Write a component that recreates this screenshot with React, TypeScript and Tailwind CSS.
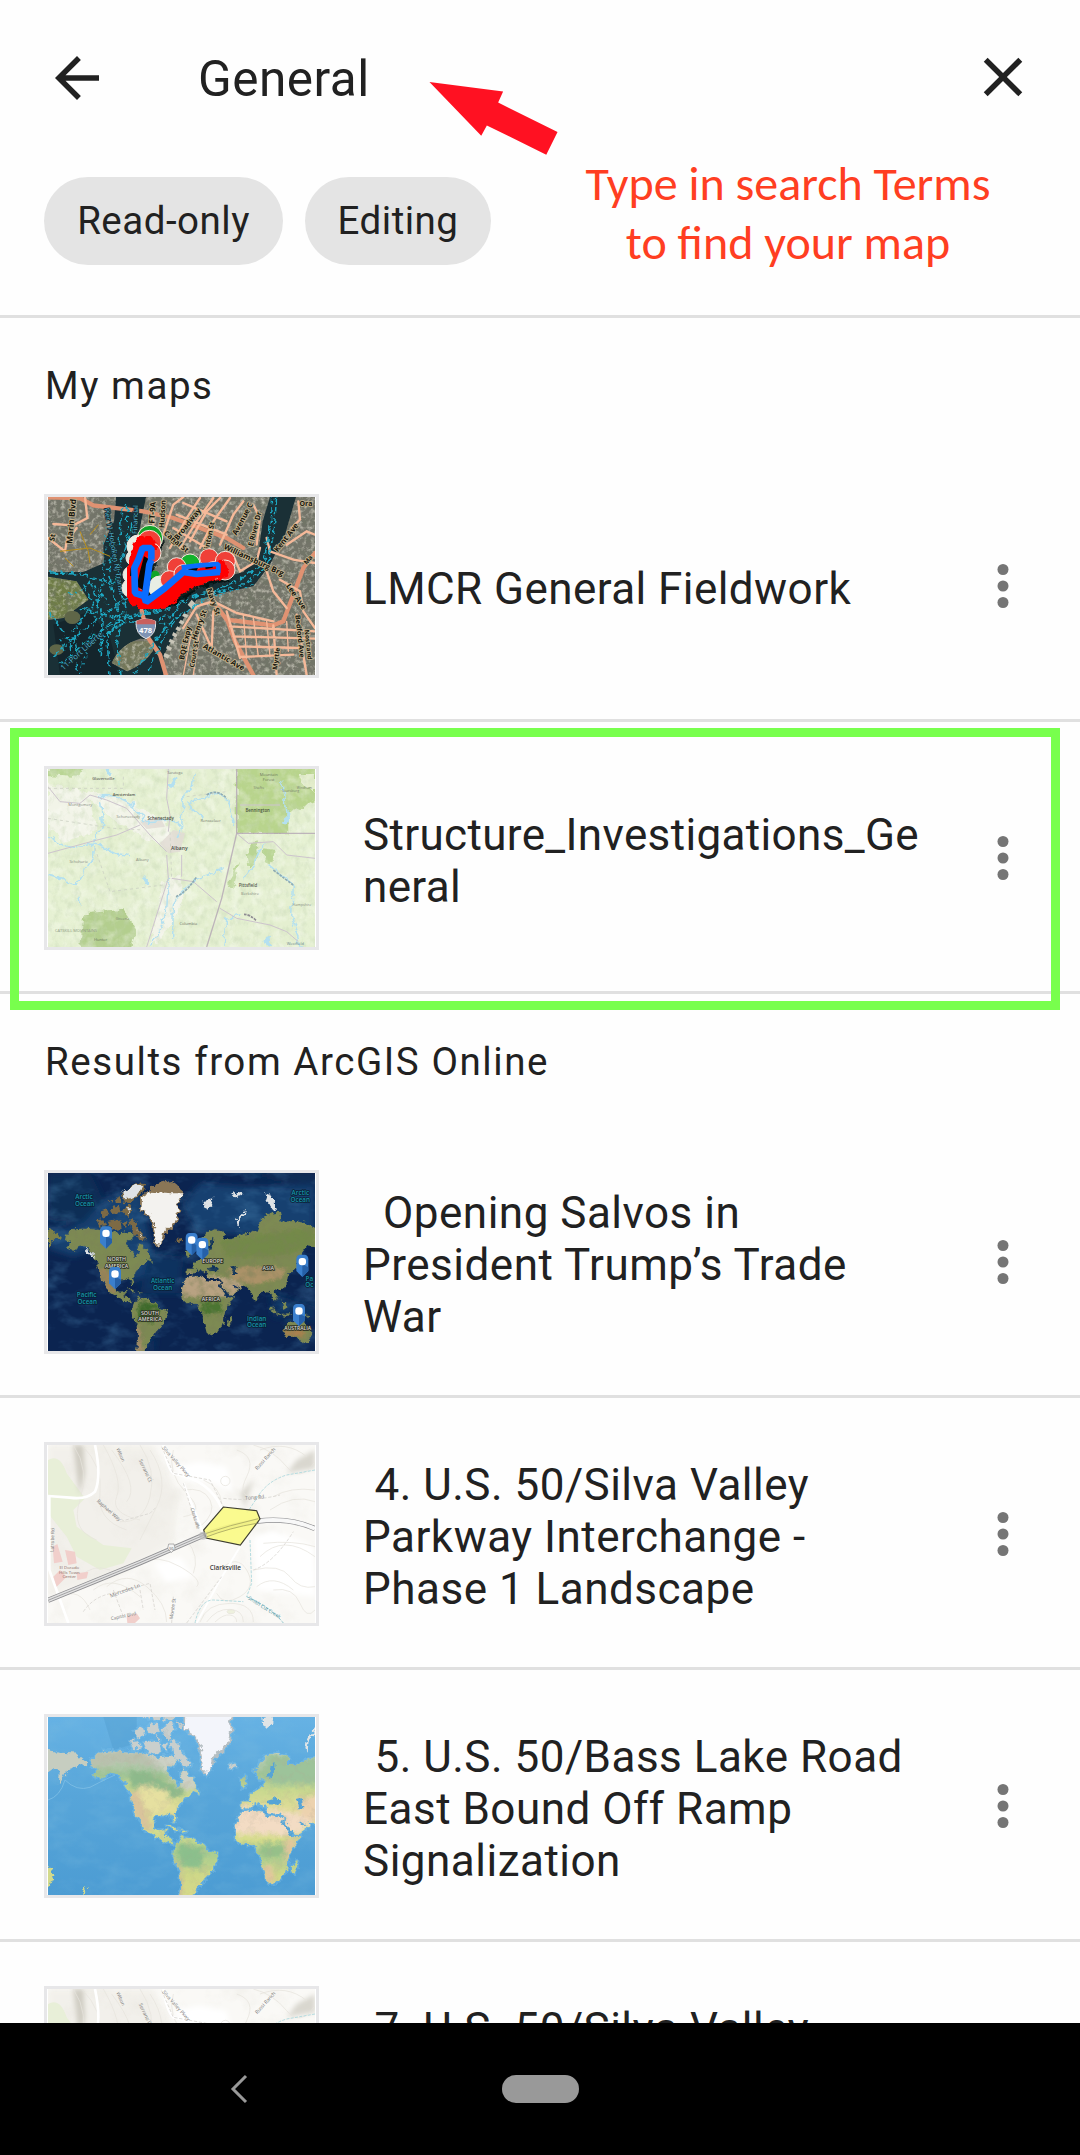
import React from "react";

/* ---------- shared map helpers ---------- */

type LabelProps = {
  x: number;
  y: number;
  t: string;
  s?: number;
  r?: number;
  c?: string;
  halo?: string;
  w?: number;
};

function Label({ x, y, t, s = 14, r = 0, c = "#333", halo, w = 400 }: LabelProps) {
  return (
    <text
      x={x}
      y={y}
      fontSize={s}
      fontWeight={w}
      fill={c}
      stroke={halo}
      strokeWidth={halo ? 5 : 0}
      paintOrder="stroke"
      strokeLinejoin="round"
      textAnchor="middle"
      dominantBaseline="central"
      transform={`rotate(${r} ${x} ${y})`}
      fontFamily="'Open Sans', sans-serif"
    >
      {t}
    </text>
  );
}

function Noise({ id, freq, matrix }: { id: string; freq: string; matrix: string }) {
  return (
    <filter id={id} x="0" y="0" width="100%" height="100%">
      <feTurbulence type="fractalNoise" baseFrequency={freq} numOctaves={4} seed={7} />
      <feColorMatrix type="matrix" values={matrix} />
    </filter>
  );
}

function MapSvg({ top, children }: { top: number; children: React.ReactNode }) {
  return (
    <svg viewBox={`24 ${top} 801 534`} className="block h-full w-full" preserveAspectRatio="none">
      {children}
    </svg>
  );
}

/* ---------- harbour satellite map ---------- */

function HarborMap() {
  return (
    <MapSvg top={37}>
      <defs>
        <Noise id="hb-n" freq="0.04" matrix="0 0 0 0 0.16  0 0 0 0 0.18  0 0 0 0 0.13  2.2 0 0 0 -0.92" />
        <Noise id="hb-l" freq="0.08" matrix="0 0 0 0 0.76  0 0 0 0 0.74  0 0 0 0 0.64  0 2.4 0 0 -1.1" />
        <filter id="hb-r" x="-5%" y="-5%" width="110%" height="110%">
          <feTurbulence type="fractalNoise" baseFrequency="0.06" numOctaves={2} seed={3} />
          <feDisplacementMap in="SourceGraphic" scale={22} xChannelSelector="R" yChannelSelector="G" />
        </filter>
        <clipPath id="hb-c">
          <path d="M24 37H228L222 110 190 180 192 235 130 262H24ZM24 276 110 290 145 345 70 400 24 405ZM318 37H690L668 110 655 205 610 262 520 285 400 350 310 345 270 250 300 130ZM768 37H825V571H370L372 510 432 400 470 345 560 322 640 305 690 240 735 150ZM215 535Q240 480 300 462 345 460 338 500 310 540 262 560Z" />
        </clipPath>
      </defs>
      <rect x="24" y="37" width="801" height="534" fill="#1a3036" />
      <path d="M40 420 150 380 210 460 240 571H60Z" fill="#14252c" />
      <g clipPath="url(#hb-c)">
        <rect x="24" y="37" width="801" height="534" fill="#74756a" />
        <path d="M24 276 110 290 150 345 70 400 24 405Z" fill="#6f7d46" />
        <path d="M215 571 220 470H345V571Z" fill="#75785a" />
        <rect x="24" y="37" width="801" height="534" filter="url(#hb-n)" opacity=".8" />
        <rect x="24" y="37" width="801" height="534" filter="url(#hb-l)" opacity=".65" />
      </g>
      <g fill="none" stroke="#5f6648" strokeWidth="20">
        <ellipse cx="97" cy="398" rx="14" ry="10" />
        <ellipse cx="50" cy="495" rx="12" ry="6" />
      </g>
      <g fill="#c9c6b8">
        <path d="M455 345 470 360 455 372 443 360ZM432 385 446 392 440 400 426 394ZM422 405 434 412 428 420 416 414ZM412 425 424 432 418 440 406 434ZM400 442 413 450 407 459 396 452ZM390 462 405 470 400 478 386 471ZM382 482 396 490 391 498 378 491ZM374 505 390 512 384 522 370 515Z" />
      </g>
      <g fill="none" stroke="#f6b999" strokeLinecap="round">
        <path strokeWidth="13" stroke="#e09272" d="M24 38 120 40 160 62 310 80 400 100 560 160 610 190M305 378 325 460 360 510 378 571M520 350 560 405 700 422 730 410 760 330 790 250 825 205M560 400 585 470 640 571" />
        <path
          strokeWidth="7"
          d="M135 37 142 100 100 122 40 118M24 160 75 200 80 170 110 130M340 120V60M370 150 400 60 430 37M390 190 440 100 480 40M420 190 470 110 520 40M450 170 500 80 540 40M480 190 520 110 570 40M400 130 500 190M410 90 560 150M430 55 560 110M540 180 580 90 610 50M570 190 600 260 650 230 660 190M640 60 660 100 650 180M775 50 780 105 755 130M680 160 690 200 760 225 825 235M680 260 700 320 740 370M720 285 780 320 790 380 825 430M740 180 800 140 825 150M430 430 470 365 520 350 590 385M470 390 510 480M520 380 515 490M560 380 600 520M590 385 700 410M570 425 825 440M580 455 825 462M590 485 780 490M600 517 760 510M700 422 710 571M770 390 800 571"
        />
        <path strokeWidth="4" d="M455 440 430 571M480 430 460 571M610 390 620 520M640 400 655 515M680 410 690 515M740 410 745 500" />
      </g>
      <g fill="none" stroke="#b98f1c" strokeWidth="3">
        <path d="M60 200 150 190 210 215M120 140 145 200 150 235M75 220 100 245M150 150 175 120" />
      </g>
      <g fill="none" stroke="#1fa9c4" strokeWidth="4.5" strokeDasharray="22 8" filter="url(#hb-r)">
        <path d="M245 70 240 160 205 250 220 330 240 400 200 460 210 571M262 60V170L230 280 260 380 230 470 240 571M285 90 265 180M30 265 120 268 180 285 240 300M24 380 90 470 110 560M130 300 160 360 100 440 110 500M40 515 150 420 260 340M60 540 180 440 250 380M150 290 190 400 180 520M695 37 690 130 670 240 600 285 520 320 420 345 400 400 360 450 280 571M710 37 702 140 680 250 610 300 520 325 410 400 380 440 320 571M250 395 330 380 440 350M200 430 260 400 400 370M120 370 250 410 380 420M150 480 240 420" />
        <path strokeDasharray="9 7" strokeWidth="3.5" d="M200 90 190 280 160 420 120 571M270 300 230 250 205 170M90 330 160 300 220 380M75 500 60 460 120 450M640 300 500 340M290 420 400 390 430 350" />
      </g>
      <Label x={92} y={110} t="Marin Blvd" s={25} r={-85} c="#16160f" w={700} halo="#c6b48e" />
      <Label x={36} y={158} t="St" s={22} r={-80} c="#16160f" w={700} halo="#c6b48e" />
      <Label x={223} y={200} t="Pier 11-Hoboken NJ Transit" s={21} r={80} c="#54b9d3" halo="#14262c" />
      <Label x={124} y={498} t="11-Port Liberte" s={23} r={-42} c="#54b9d3" halo="#14262c" />
      <Label x={285} y={118} t="NJ Financial" s={21} r={-88} c="#54b9d3" halo="#14262c" />
      <Label x={335} y={84} t="FT-9A" s={24} r={-87} c="#16160f" w={700} halo="#c6b48e" />
      <Label x={366} y={88} t="Hudson" s={22} r={-87} c="#16160f" w={700} halo="#c6b48e" />
      <Label x={436} y={125} t="E Broadway" s={23} r={-52} c="#16160f" w={700} halo="#c6b48e" />
      <Label x={410} y={170} t="Canal St" s={22} r={40} c="#16160f" w={700} halo="#c6b48e" />
      <Label x={506} y={162} t="Clinton St" s={21} r={-78} c="#16160f" w={700} halo="#c6b48e" />
      <Label x={607} y={102} t="Avenue C" s={23} r={-62} c="#16160f" w={700} halo="#c6b48e" />
      <Label x={643} y={132} t="E River Dr" s={22} r={-76} c="#16160f" w={700} halo="#c6b48e" />
      <Label x={642} y={225} t="Williamsburg Brg" s={23} r={25} c="#16160f" w={700} halo="#c6b48e" />
      <Label x={738} y={158} t="Kent Ave" s={23} r={-52} c="#16160f" w={700} halo="#c6b48e" />
      <Label x={770} y={335} t="Lee Ave" s={23} r={55} c="#16160f" w={700} halo="#c6b48e" />
      <Label x={798} y={56} t="Ora" s={21} c="#16160f" w={700} halo="#c6b48e" />
      <Label x={804} y={225} t="Ma" s={19} r={-50} c="#16160f" w={700} halo="#c6b48e" />
      <Label x={780} y={455} t="Bedford Ave" s={21} r={84} c="#16160f" w={700} halo="#c6b48e" />
      <Label x={806} y={480} t="Nostrand" s={19} r={84} c="#16160f" w={700} halo="#c6b48e" />
      <Label x={552} y={516} t="Atlantic Ave" s={23} r={30} c="#16160f" w={700} halo="#c6b48e" />
      <Label x={476} y={420} t="Henry St" s={22} r={-70} c="#16160f" w={700} halo="#c6b48e" />
      <Label x={434} y={475} t="BQE Expy" s={22} r={-78} c="#16160f" w={700} halo="#c6b48e" />
      <Label x={462} y={508} t="Court St" s={20} r={-80} c="#16160f" w={700} halo="#c6b48e" />
      <Label x={522} y={350} t="Navy St" s={22} r={70} c="#16160f" w={700} halo="#c6b48e" />
      <Label x={708} y={522} t="Myrtle" s={20} r={-82} c="#16160f" w={700} halo="#c6b48e" />
      {/* survey tracks */}
      <g filter="url(#hb-r)">
        <path d="M325 165 298 240 292 310 325 350 400 310 450 268 555 243" fill="none" stroke="#071012" strokeWidth="76" strokeLinejoin="round" strokeLinecap="round" transform="translate(8 6)" opacity=".85" />
      </g>
      <g fill="#f04038" stroke="#f5e9df" strokeWidth="3">
        <circle cx="330" cy="160" r="38" fill="#12a428" />
        <circle cx="295" cy="185" r="34" fill="#e8eee4" />
        <circle cx="280" cy="220" r="22" fill="#dfe9df" />
        <circle cx="275" cy="270" r="26" fill="#e8eee4" />
        <circle cx="275" cy="310" r="29" fill="#e8eee4" />
        <circle cx="345" cy="272" r="14" fill="#12a428" stroke="none" />
        <circle cx="328" cy="172" r="35" />
        <circle cx="332" cy="205" r="31" />
        <circle cx="360" cy="308" r="34" fill="#e8eee4" />
        <circle cx="450" cy="238" r="30" fill="#13b32c" />
        <circle cx="410" cy="247" r="28" />
        <circle cx="388" cy="285" r="27" />
        <circle cx="430" cy="268" r="28" />
        <circle cx="507" cy="220" r="28" />
        <circle cx="490" cy="270" r="24" fill="#13b32c" />
        <circle cx="465" cy="266" r="27" />
        <circle cx="520" cy="258" r="27" />
        <circle cx="556" cy="230" r="30" />
        <circle cx="555" cy="256" r="30" />
      </g>
      <path filter="url(#hb-r)" fill="none" stroke="#ff0000" strokeWidth="50" strokeLinejoin="bevel" d="M340 165 302 185 294 240 276 275 282 330 320 362 372 344 435 292 500 268 560 250" />
      <path fill="#060606" d="M312 215 330 225 318 270 330 300 312 318 290 305 300 260ZM272 250 284 240 280 270 270 275ZM445 252 475 247 470 258 447 262ZM495 242 520 240 518 249 497 253Z" />
      <g fill="none" stroke="#0a6dff" strokeLinejoin="bevel">
        <path strokeWidth="20" d="M334 225V190H308L295 225 283 250 285 325 315 335 328 240 334 225M308 320 318 352 375 310 430 262 470 268 540 262" />
        <path strokeWidth="14" d="M425 248 480 242 535 238V265" />
      </g>
      {/* interstate shield */}
      <path d="M288 410Q318 396 347 410 350 450 318 462 286 450 288 410Z" fill="#7f93b4" stroke="#e6e6e6" strokeWidth="3" />
      <path d="M290 408Q318 396 346 408V419H290Z" fill="#c9605d" />
      <Label x={317} y={437} t="478" s={23} c="#fff" w={700} />
    </MapSvg>
  );
}

/* ---------- topographic map of the Albany area ---------- */

function TopoMap() {
  return (
    <MapSvg top={42}>
      <defs>
        <Noise id="tp-g" freq="0.009" matrix="0 0 0 0 0.80  0 0 0 0 0.89  0 0 0 0 0.66  2.6 0 0 0 -0.9" />
        <Noise id="tp-w" freq="0.03" matrix="0 0 0 0 1  0 0 0 0 1  0 0 0 0 0.97  0 2.2 0 0 -0.95" />
        <Noise id="tp-d" freq="0.05 0.035" matrix="0 0 0 0 0.55  0 0 0 0 0.66  0 0 0 0 0.45  0 0 1.4 0 -0.64" />
        <filter id="tp-r" x="-10%" y="-10%" width="120%" height="120%">
          <feTurbulence type="fractalNoise" baseFrequency="0.04" numOctaves={3} seed={5} />
          <feDisplacementMap in="SourceGraphic" scale={26} xChannelSelector="R" yChannelSelector="G" />
          <feGaussianBlur stdDeviation="2" />
        </filter>
      </defs>
      <rect x="24" y="42" width="801" height="534" fill="#e4efd0" />
      <rect x="24" y="42" width="801" height="534" filter="url(#tp-g)" opacity=".8" />
      <g filter="url(#tp-r)">
        <path d="M24 90 150 110 170 230 70 260 24 220ZM130 110 250 130 380 200 420 290 330 260 200 180ZM370 380 420 360 430 440 360 560 330 576Z" fill="#f5f4ec" opacity=".85" />
        <path d="M590 30H840V130L745 175V235L590 233Z" fill="#b8d48c" />
        <path d="M130 475 250 465 290 520 270 590H120Z" fill="#b3ce8e" />
        <path d="M24 30H160L100 65 24 60ZM620 300 650 255 655 310 625 340ZM670 280 705 285 695 330 675 320ZM560 390 600 320 580 400Z" fill="#b9d594" />
        <path d="M775 60H825V110L790 90Z" fill="#e3edcb" />
      </g>
      <rect x="24" y="42" width="801" height="534" filter="url(#tp-w)" opacity=".4" />
      <rect x="24" y="42" width="801" height="534" filter="url(#tp-d)" opacity=".75" />
      <g fill="#e2dcd5" opacity=".85">
        <path d="M300 200 360 185 375 215 320 222ZM360 265 400 225 435 235 420 290 385 295Z" />
      </g>
      <g fill="none" stroke="#b4e0f0" strokeWidth="4.5" strokeLinecap="round" filter="url(#tp-r)">
        <path d="M175 125Q230 110 290 160L315 200 395 195 425 215M182 140 188 215 160 262 158 310 110 385 24 360M24 245 90 280 170 265 240 300 270 305M465 55 460 90 430 130 425 215 415 250M445 148 490 190M445 148 540 110 565 150 580 205M385 365 380 470 335 576M398 550 400 450 425 410 470 370 550 345M668 262 640 330 610 370M690 330 760 390 755 480 780 571M725 80 740 190M117 430 120 450M555 576 560 490 600 480" />
        <path d="M393 95 406 70M735 205 745 175M312 370 322 385M203 45 212 50M683 552 688 565" strokeWidth="12" />
      </g>
      <g fill="none" stroke="#cdc4cd" strokeWidth="3">
        <path d="M24 95 60 140 120 145 150 120 200 135 260 160 330 240 380 290M24 295 160 258 230 240 300 210M385 42 380 130 390 180 385 230M395 370 460 380 530 440M425 300 425 365M380 300 385 370 350 480 320 576M590 235 625 265 700 260 740 300 825 310M540 460 590 490 690 510 740 530 775 560M600 150 720 150" />
        <path strokeDasharray="9 9" strokeWidth="2.5" stroke="#cdd1c4" d="M24 100H250V60M24 190 220 220 310 225M165 280 210 410 370 390M390 230 395 370M440 125 560 110" />
      </g>
      <g fill="none" stroke="#b3a5b4" strokeWidth="4">
        <path d="M590 42V235H825M590 235 545 430 500 576" opacity=".8" />
      </g>
      <g stroke="#8fabb3" fill="none" strokeWidth="5" strokeDasharray="8 3">
        <path d="M500 120Q530 100 560 130M408 425Q440 412 470 365M700 345Q740 375 762 392" />
        <path d="M612 478Q630 478 650 498" stroke="#8e8b92" />
      </g>
      <Label x={190} y={71} t="Gloversville" s={12} c="#65695f" w={600} />
      <Label x={252} y={119} t="Amsterdam" s={12} c="#55594f" w={600} />
      <Label x={121} y={149} t="Montgomery" s={12} c="#858a7d" />
      <Label x={265} y={185} t="Schenectady" s={12} c="#858a7d" />
      <Label x={362} y={190} t="Schenectady" s={13} c="#474b43" w={600} />
      <Label x={512} y={195} t="Rensselaer" s={12} c="#72766b" />
      <Label x={418} y={278} t="Albany" s={15} c="#474b43" w={600} />
      <Label x={307} y={313} t="Albany" s={12} c="#858a7d" />
      <Label x={116} y={320} t="Schoharie" s={12} c="#858a7d" />
      <Label x={405} y={53} t="Saratoga" s={11} c="#777" />
      <Label x={686} y={58} t="Mountain" s={12} c="#6a775a" />
      <Label x={686} y={72} t="Forest" s={12} c="#6a775a" />
      <Label x={653} y={166} t="Bennington" s={13} c="#475039" w={600} />
      <Label x={752} y={105} t="Searsburg" s={11} c="#7c8570" />
      <Label x={656} y={97} t="Shafts" s={11} c="#7c8570" />
      <Label x={793} y={98} t="Windham" s={10} c="#7c8570" />
      <Label x={624} y={390} t="Pittsfield" s={13} c="#55594f" w={600} />
      <Label x={630} y={414} t="Berkshire" s={12} c="#858a7d" />
      <Label x={786} y={447} t="Hampshire" s={11} c="#858a7d" />
      <Label x={445} y={505} t="Columbia" s={12} c="#72766b" />
      <Label x={108} y={525} t="CATSKILL MOUNTAINS" s={12} c="#8f9a83" />
      <Label x={248} y={491} t="Greene" s={12} c="#7c8570" />
      <Label x={182} y={552} t="Hunter" s={12} c="#6c775e" />
      <Label x={766} y={564} t="Westfield" s={12} c="#6d8a8f" />
    </MapSvg>
  );
}

/* ---------- world outlines shared by both world maps ---------- */

const AMERICAS =
  "M78 225 75 240 95 250 80 265 100 272 125 258 150 270 168 300 178 330 180 355 195 375 205 395 215 402 228 410 250 420 265 428 276 430 270 418 258 412 256 396 240 398 228 392 225 375 232 362 255 360 268 355 276 372 281 372 276 352 290 335 300 320 315 312 320 300 336 306 332 292 325 275 310 260 300 244 290 255 296 280 285 292 278 275 262 262 258 250 275 235 285 225 270 215 240 220 200 210 160 205 130 203 100 205ZM285 420 300 413 325 418 345 430 360 447 380 457 378 475 365 500 350 515 340 530 325 550 315 571 300 600H285L290 560 292 520 290 495 275 465 276 445ZM258 385 280 388 288 395 270 392ZM292 396 306 398 300 402Z";
const ARCTIC =
  "M170 180 190 178 198 195 178 200ZM205 185 240 178 245 205 215 208ZM180 155 200 148 205 165 188 170ZM210 145 235 140 240 160 215 162ZM245 150 270 135 280 150 262 168ZM248 190 262 185 258 205ZM268 180 285 185 300 215 318 235 310 245 290 232 275 210ZM245 100 285 70 318 72 312 95 280 115 275 130 255 128ZM225 118 240 112 244 130 228 132ZM205 120 215 116 218 128ZM408 237 425 234 430 243 412 247Z";
const GREENLAND =
  "M300 110 330 88 350 70 390 60 415 80 433 95 416 130 418 160 410 190 393 205 375 222 366 240 358 265 345 250 340 225 338 195 325 165 300 150Z";
const AFRICA =
  "M440 352 482 348 492 360 540 366 555 400 562 413 582 412 570 430 555 455 552 480 545 500 530 520 510 527 500 518 490 480 485 455 470 432 440 430 424 415 424 390ZM562 478 575 468 577 485 568 502 562 497Z";
const EURASIA =
  "M440 345V326H460L462 312 472 302 492 290 496 275 478 268 470 250 500 215 525 205 555 220 548 236 575 235 620 222 640 212 650 215 664 180 690 158 720 155 725 185 760 183 800 190 830 205V262L800 258 785 280 775 305 772 325 745 340 740 370 735 385 710 390 705 400 715 420 703 425 690 400 672 390 645 425 632 395 620 380 600 374 602 386 575 408 560 400 545 370 540 358 505 352 500 338 490 340 480 325 470 330 455 345ZM440 295 452 284 448 262 438 272ZM775 345 790 335 800 310 794 308 786 330ZM695 435 715 455 708 460ZM725 420 745 440 730 450ZM690 440 720 462 750 460 745 468 700 462Z";
const AUSTRALIA = "M728 515 745 492 768 482 790 475 800 495 817 520 806 548 788 552 770 530 738 530ZM760 452 800 460 810 470 785 468Z";
const SEAS = "M500 322 515 318 540 324 530 334 505 333ZM575 320 586 318 590 345 580 345ZM540 368 566 408 560 410 536 374ZM580 372 600 384 588 386ZM505 262 512 240 520 228 518 262 505 275Z";

function Pin({ x, y }: { x: number; y: number }) {
  return (
    <g transform={`translate(${x} ${y})`}>
      <path d="M-18-20Q-18-32-8-34H8Q18-32 18-20V15L0 33-18 15Z" fill="#3a7fcd" />
      <path d="M0-6 18 4V15L0 33Z" fill="#2560a8" />
      <rect x="-11" y="-24" width="22" height="22" rx="9" fill="#fff" />
    </g>
  );
}

function SatelliteWorldMap() {
  const sea = "#1592a6";
  return (
    <MapSvg top={39}>
      <defs>
        <Noise id="sw-o" freq="0.012 0.02" matrix="0 0 0 0 0.08  0 0 0 0 0.26  0 0 0 0 0.48  2.4 0 0 0 -1.15" />
        <Noise id="sw-l" freq="0.04" matrix="0 0 0 0 0.2  0 0 0 0 0.22  0 0 0 0 0.1  2.4 0 0 0 -1" />
        <filter id="sw-r" x="-5%" y="-5%" width="110%" height="110%">
          <feTurbulence type="fractalNoise" baseFrequency="0.07" numOctaves={3} seed={2} />
          <feDisplacementMap in="SourceGraphic" scale={20} xChannelSelector="R" yChannelSelector="G" />
        </filter>
        <filter id="sw-b">
          <feGaussianBlur stdDeviation="9" />
        </filter>
        <filter id="sw-s">
          <feGaussianBlur stdDeviation="4" />
        </filter>
        <clipPath id="sw-c">
          <path d={AMERICAS + AFRICA + EURASIA + AUSTRALIA} />
        </clipPath>
      </defs>
      <rect x="24" y="39" width="801" height="534" fill="#0b2450" />
      <g filter="url(#sw-b)">
        <path d="M480 70 620 80 825 75V230L620 225 470 215 430 130ZM24 210 100 200 160 130 300 80 330 240 350 320 280 370 240 240 100 290 24 265Z" fill="#133f70" />
        <path d="M24 39H150L190 120 130 190 24 180ZM600 39H825V70L700 60Z" fill="#0b2d57" />
        <path d="M330 280 430 290 420 400 300 400ZM690 400 825 440V480L700 470ZM300 573 350 530 340 573Z" fill="#10325f" />
      </g>
      <rect x="24" y="39" width="801" height="534" filter="url(#sw-o)" opacity=".4" />
      <g filter="url(#sw-r)">
        <path d={AMERICAS + AFRICA + EURASIA + AUSTRALIA} fill="#7d8a52" />
        <g clipPath="url(#sw-c)">
          <g filter="url(#sw-s)">
            <path d="M150 320 210 330 230 400 180 390Z" fill="#9a8458" />
            <path d="M280 500 300 500 310 573 285 573Z" fill="#a38a67" />
            <path d="M300 420 360 440 340 490 290 480Z" fill="#3e6a2b" />
            <path d="M415 340 560 350 610 375 570 412 415 410Z" fill="#b8a282" />
            <path d="M480 425 540 425 545 460 490 465Z" fill="#4b7431" />
            <path d="M560 325 690 318 745 330 720 355 640 375 580 360Z" fill="#ab9268" />
            <path d="M540 240 820 200 825 265 700 290 560 290Z" fill="#73894a" />
            <path d="M728 515 780 500 800 530 740 530Z" fill="#a9804f" />
          </g>
        </g>
        <path d="M24 210 50 215 60 235 40 240 30 265 24 255Z" fill="#7b8148" />
        <path d={ARCTIC} fill="#7d6a45" />
        <path d="M250 95 285 75 310 78 290 105 270 115 255 118ZM290 210 305 225 312 238ZM262 145 276 145 265 160ZM215 150 230 148ZM488 120 520 115 515 135 500 148 490 140ZM570 103 605 95 610 108 585 112ZM675 100 690 105 700 125 708 150 695 148 682 122ZM588 195Q592 165 618 152L612 165 598 180 596 205ZM130 262 150 275 170 295 150 285Z" fill="#dfe3e6" />
        <path d={GREENLAND} fill="#8a7657" />
        <path d="M306 112 332 95 395 100 430 100 413 130 413 160 403 188 386 203 369 220 358 260 347 247 344 217 341 190 327 163 305 148Z" fill="#f3f2ef" />
        <path d={SEAS} fill="#10305c" />
      </g>
      <g clipPath="url(#sw-c)">
        <rect x="24" y="39" width="801" height="534" filter="url(#sw-l)" opacity=".5" />
      </g>
      <Label x={132} y={110} t="Arctic" s={19} c={sea} halo="#0a2036" w={600} />
      <Label x={134} y={131} t="Ocean" s={19} c={sea} halo="#0a2036" w={600} />
      <Label x={781} y={97} t="Arctic" s={19} c={sea} halo="#0a2036" w={600} />
      <Label x={781} y={118} t="Ocean" s={19} c={sea} halo="#0a2036" w={600} />
      <Label x={368} y={362} t="Atlantic" s={19} c={sea} halo="#0a2036" w={600} />
      <Label x={368} y={382} t="Ocean" s={19} c={sea} halo="#0a2036" w={600} />
      <Label x={140} y={404} t="Pacific" s={19} c={sea} halo="#0a2036" w={600} />
      <Label x={142} y={423} t="Ocean" s={19} c={sea} halo="#0a2036" w={600} />
      <Label x={650} y={475} t="Indian" s={19} c={sea} halo="#0a2036" w={600} />
      <Label x={650} y={494} t="Ocean" s={19} c={sea} halo="#0a2036" w={600} />
      <Label x={808} y={355} t="Pa" s={19} c={sea} halo="#0a2036" w={600} />
      <Label x={808} y={374} t="Oc" s={19} c={sea} halo="#0a2036" w={600} />
      <Label x={230} y={298} t="NORTH" s={16} c="#d9d9d2" halo="#2c3022" w={600} />
      <Label x={230} y={317} t="AMERICA" s={16} c="#d9d9d2" halo="#2c3022" w={600} />
      <Label x={330} y={458} t="SOUTH" s={16} c="#d9d9d2" halo="#2c3022" w={600} />
      <Label x={330} y={478} t="AMERICA" s={16} c="#d9d9d2" halo="#2c3022" w={600} />
      <Label x={518} y={303} t="EUROPE" s={16} c="#d9d9d2" halo="#2c3022" w={600} />
      <Label x={513} y={416} t="AFRICA" s={16} c="#d9d9d2" halo="#2c3022" w={600} />
      <Label x={685} y={325} t="ASIA" s={16} c="#d9d9d2" halo="#2c3022" w={600} />
      <Label x={773} y={504} t="AUSTRALIA" s={15} c="#d9d9d2" halo="#2c3022" w={600} />
      <Pin x={198} y={233} />
      <Pin x={225} y={355} />
      <Pin x={455} y={253} />
      <Pin x={487} y={267} />
      <Pin x={787} y={318} />
      <Pin x={777} y={466} />
    </MapSvg>
  );
}

function PhysicalWorldMap() {
  return (
    <MapSvg top={51}>
      <defs>
        <linearGradient id="pw-s" x1="0" y1="0" x2="0" y2="1">
          <stop offset="0" stopColor="#66b2e4" />
          <stop offset=".45" stopColor="#57a5d9" />
          <stop offset="1" stopColor="#4c9cd3" />
        </linearGradient>
        <linearGradient id="pw-l" gradientUnits="userSpaceOnUse" x1="0" y1="200" x2="0" y2="560">
          <stop offset="0" stopColor="#cfd3cb" />
          <stop offset=".09" stopColor="#b4cbae" />
          <stop offset=".17" stopColor="#9fc396" />
          <stop offset=".27" stopColor="#c7d88f" />
          <stop offset=".4" stopColor="#dfdc97" />
          <stop offset=".56" stopColor="#d3dc8f" />
          <stop offset=".7" stopColor="#a9cd90" />
          <stop offset=".85" stopColor="#cfd888" />
          <stop offset="1" stopColor="#d6d98a" />
        </linearGradient>
        <Noise id="pw-n" freq="0.012 0.02" matrix="0 0 0 0 0.22  0 0 0 0 0.52  0 0 0 0 0.74  2.6 0 0 0 -1.1" />
        <Noise id="pw-t" freq="0.05" matrix="0 0 0 0 0.45  0 0 0 0 0.4  0 0 0 0 0.3  2.4 0 0 0 -1.15" />
        <filter id="pw-r" x="-5%" y="-5%" width="110%" height="110%">
          <feTurbulence type="fractalNoise" baseFrequency="0.07" numOctaves={3} seed={2} />
          <feDisplacementMap in="SourceGraphic" scale={18} xChannelSelector="R" yChannelSelector="G" />
        </filter>
        <filter id="pw-b">
          <feGaussianBlur stdDeviation="6" />
        </filter>
        <clipPath id="pw-c">
          <path d={AMERICAS + AFRICA + EURASIA} />
        </clipPath>
      </defs>
      <rect x="24" y="51" width="801" height="534" fill="url(#pw-s)" />
      <rect x="24" y="51" width="801" height="534" filter="url(#pw-n)" opacity=".22" />
      <path d="M24 300Q60 290 75 240 110 275 150 262 190 240 225 225" fill="none" stroke="#79bbe4" strokeWidth="3" />
      <path d="M190 51H290V130L220 150Z" fill="#4f9bce" opacity=".4" />
      <g transform="translate(59 -100) scale(1.24)">
        <path d={AMERICAS + AFRICA + EURASIA + GREENLAND + ARCTIC} fill="none" stroke="#7cc0ea" strokeWidth="8" strokeLinejoin="round" opacity=".45" filter="url(#pw-r)" />
        <g filter="url(#pw-r)">
          <path d={AMERICAS + AFRICA + EURASIA} fill="url(#pw-l)" />
          <g clipPath="url(#pw-c)">
            <g filter="url(#pw-b)">
              <path d="M70 200 250 205 240 250 190 235 120 235 70 250Z" fill="#b9c1ae" />
              <path d="M200 205 330 210 330 300 290 290 250 245Z" fill="#cdd1c6" />
              <path d="M165 255 200 250 290 290 310 305 270 320 230 290 180 300Z" fill="#8db98b" />
              <path d="M185 300 200 285 260 300 270 340 230 360 205 340Z" fill="#e6e0a0" />
              <path d="M165 310 190 300 225 390 205 395 180 360Z" fill="#d9c39b" />
              <path d="M415 335 560 350 620 370 570 408 415 404Z" fill="#f3dcc4" />
              <path d="M424 408H560V425H430Z" fill="#d8de8a" />
              <path d="M485 428 540 428 545 460 490 465Z" fill="#95c089" />
              <path d="M545 420 580 415 560 460 545 480ZM490 480 515 480 520 527H495Z" fill="#e2c79d" />
              <path d="M575 320 640 310V375L585 365Z" fill="#ecd2ae" />
              <path d="M500 210 640 220V280L520 285 495 270Z" fill="#9dc39a" />
              <path d="M285 425 350 440 345 485 290 480Z" fill="#8bbf8c" />
              <path d="M272 455 292 490 295 600H280L285 500Z" fill="#c9b39b" />
            </g>
            <rect x="-30" y="100" width="700" height="480" filter="url(#pw-t)" opacity=".3" />
          </g>
          <path d={ARCTIC} fill="#c9cfcd" />
          <path d="M250 150 262 160 270 175 260 178ZM285 130 300 140 290 150ZM230 165 240 170 235 175ZM265 80 295 100 280 125 262 120Z" fill="#c3cac9" />
          <path d={GREENLAND} fill="#b6bfc3" />
          <path d="M304 108 335 88 350 74 390 66 425 98 410 130 412 160 403 188 386 203 369 220 358 260 347 247 344 217 341 190 327 163 303 148Z" fill="#f3f5fb" />
          <path d={SEAS} fill="#57a4d6" />
          <path d="M488 120 520 115 515 135 500 148 490 140ZM592 200Q592 170 628 145L618 160 602 182 600 205Z" fill="#dfe4e6" />
          <path d="M-34 200 0 208 40 210 68 235 50 240 30 245 15 255 5 275-2 285 0 255-10 245-34 262Z" fill="#c6cdc0" />
          <path d="M-34 480-20 490-14 510-22 530-34 540ZM62 530 66 540 58 552 46 556 56 545Z" fill="#d3da8c" />
        </g>
      </g>
    </MapSvg>
  );
}

/* ---------- Clarksville street map ---------- */

function StreetMap({ id }: { id: string }) {
  const contours = [
    "M100 45Q150 120 120 210T170 330",
    "M125 45Q190 110 180 190T260 300",
    "M190 45Q250 150 230 200T300 270",
    "M215 60Q300 170 260 215",
    "M300 45Q350 120 330 200T240 275",
    "M330 60Q390 150 350 230T300 330",
    "M400 60Q380 130 440 190T430 260",
    "M430 180Q490 170 510 210T480 290",
    "M490 150Q540 170 545 220",
    "M590 60Q650 80 620 140T640 200",
    "M640 45Q700 60 740 110T825 95",
    "M660 60Q740 30 800 80",
    "M700 200Q750 170 825 180",
    "M690 240Q760 190 825 215",
    "M670 340Q760 330 825 350",
    "M660 380Q730 310 825 380",
    "M640 420Q720 400 750 440T825 470",
    "M700 480Q760 470 780 520T825 540",
    "M650 470Q700 430 760 480",
    "M480 576Q500 520 570 520T640 576",
    "M500 576Q530 535 570 538T610 576",
    "M525 576Q550 552 570 555T590 576",
    "M200 470Q260 420 320 470T380 576",
    "M160 480Q220 430 300 500",
    "M300 400Q350 370 420 410T470 470",
    "M440 330Q480 380 460 430",
    "M120 440Q160 400 210 420",
    "M60 500Q120 470 150 540",
    "M540 420Q590 370 620 420T600 500 530 490",
  ];
  return (
    <MapSvg top={45}>
      <defs>
        <Noise id={`st-n${id}`} freq="0.012" matrix="0 0 0 0 0.78  0 0 0 0 0.76  0 0 0 0 0.7  2.4 0 0 0 -1.15" />
        <filter id={`st-b${id}`}>
          <feGaussianBlur stdDeviation="8" />
        </filter>
      </defs>
      <rect x="24" y="45" width="801" height="534" fill="#faf9f6" />
      <path d="M24 45H340L420 200 400 340 250 430 24 500Z" fill="#f1efe9" opacity=".8" filter={`url(#st-b${id})`} />
      <rect x="24" y="45" width="801" height="534" filter={`url(#st-n${id})`} opacity=".35" />
      <path d="M24 90Q60 70 80 130L135 205 100 240 110 290 190 345 275 355 250 400 180 420 110 380 80 320 24 250Z" fill="#e8efd8" />
      <g filter={`url(#st-b${id})`}>
        <path d="M100 45H130L135 130 118 195Z" fill="#cfccc2" />
        <path d="M770 90 825 60V115L740 130ZM600 190 640 150 615 230Z" fill="#d9d7cf" />
        <path d="M400 110 480 95 560 110 580 190 520 160 430 150ZM340 400 420 380 460 440 380 460ZM640 320 700 300 825 350V500L650 480Z" fill="#fff" />
      </g>
      <g fill="none" stroke="#e6e3dd" strokeWidth="2.2">
        {contours.map((d) => (
          <path key={d} d={d} />
        ))}
        <circle cx="556" cy="153" r="14" />
        <ellipse cx="573" cy="545" rx="12" ry="6" fill="#eef1de" />
      </g>
      <g fill="none" stroke="#fff" strokeWidth="8">
        <path d="M165 45Q185 140 165 185 140 210 90 203L24 198M28 200V420L85 579M370 45Q380 110 400 130 510 150 545 235M430 160 470 260 490 310" />
        <path d="M470 579 540 450 600 350" strokeWidth="6" />
      </g>
      <g fill="none" stroke="#d8d6d1" strokeWidth="2.5" strokeDasharray="10 5">
        <path d="M170 215 250 272 330 250 350 230M365 50 400 130 510 150 550 230M430 160 470 290M300 100 340 150M550 205Q640 215 720 195M640 420Q700 400 760 305M130 545Q160 500 215 490L330 460 345 540M220 480 250 560M300 480 310 540M395 579 400 500M440 579 545 440" />
      </g>
      <g fill="none" stroke="#b5dce0" strokeWidth="3" strokeDasharray="9 4">
        <path d="M825 120 740 135Q690 150 660 190L620 250M630 330 635 460 620 500M465 579Q480 510 520 510L610 515" />
        <path d="M620 500Q690 530 730 579" stroke="#8cc3cc" strokeWidth="3" />
      </g>
      <g fill="#f1cfcb">
        <path d="M75 360 105 365 110 400 85 405ZM38 350 52 342 68 395 42 400ZM40 440 60 420 80 440 50 470ZM110 430 145 425 140 445 112 450ZM260 560 290 550 300 565 285 579H262Z" />
      </g>
      {/* highway */}
      <g fill="none">
        <path d="M24 511 300 398 490 316Q570 285 655 273 750 262 825 296" stroke="#8f8f92" strokeWidth="16" />
        <path d="M24 511 300 398 490 316" stroke="#e2e2e2" strokeWidth="11" />
        <path d="M24 511 300 398 490 316" stroke="#a2a2a4" strokeWidth="3" />
        <path d="M655 273Q750 262 825 296" stroke="#f8f8f8" strokeWidth="12" />
      </g>
      <path d="M386 342H402L405 355 394 368 383 355Z" fill="#f4f4f4" stroke="#909090" strokeWidth="2" />
      <Label x={394} y={354} t="50" s={11} c="#555" />
      <path d="M550 231 650 242 660 267 601 345 498 324 491 300Z" fill="#fafa86" fillOpacity=".92" stroke="#3d3d30" strokeWidth="3.5" />
      <path d="M493 312Q570 285 655 266M496 322Q570 293 650 280" fill="none" stroke="#a8a763" strokeWidth="2.5" />
      <circle cx="489" cy="317" r="12" fill="#bcbcbc" opacity=".7" />
      <Label x={556} y={411} t="Clarksville" s={19} c="#3a3a3a" w={600} />
      <Label x={409} y={94} t="Silva Valley Pkwy" s={15} r={48} c="#7b7b7b" />
      <Label x={243} y={74} t="Wilson" s={14} r={65} c="#7b7b7b" />
      <Label x={317} y={122} t="Serrano Ct" s={15} r={65} c="#7b7b7b" />
      <Label x={207} y={240} t="Raphael Way" s={15} r={42} c="#7b7b7b" />
      <Label x={467} y={265} t="Clarksville" s={14} r={72} c="#7b7b7b" />
      <Label x={644} y={201} t="Tong Rd" s={15} r={-5} c="#7b7b7b" />
      <Label x={675} y={86} t="Russi Ranch" s={15} r={-48} c="#7b7b7b" />
      <Label x={255} y={481} t="Mercedes Ln" s={16} r={-20} c="#7b7b7b" />
      <Label x={250} y={557} t="Capitol Blvd" s={14} r={-12} c="#7b7b7b" />
      <Label x={397} y={536} t="Monte St" s={15} r={-82} c="#7b7b7b" />
      <Label x={36} y={330} t="Latrobe Rd" s={14} r={-88} c="#7b7b7b" />
      <Label x={88} y={410} t="El Dorado" s={13} c="#8b6a66" />
      <Label x={88} y={425} t="Hills Town" s={13} c="#8b6a66" />
      <Label x={88} y={439} t="Center" s={13} c="#8b6a66" />
      <Label x={674} y={532} t="Smith Cut Creek" s={15} r={32} c="#4a93a2" />
    </MapSvg>
  );
}

/* ---------- app chrome ---------- */

function Chip({ width, children }: { width: string; children: React.ReactNode }) {
  return (
    <button
      className={`flex h-[88px] items-center justify-center rounded-full bg-[#e4e4e4] text-[38.5px] leading-none tracking-[0.5px] ${width}`}
    >
      {children}
    </button>
  );
}

function SectionTitle({ children }: { children: React.ReactNode }) {
  return (
    <h2 className="flex h-[132px] shrink-0 items-center px-[45px] pt-1 text-[38.5px] leading-[46px] tracking-[1.57px]">
      {children}
    </h2>
  );
}

type MapRowProps = { title: React.ReactNode; tracking?: string; children: React.ReactNode };

function MapRow({ title, tracking = "tracking-[0.5px]", children }: MapRowProps) {
  return (
    <div className="flex h-[272px] shrink-0 items-center border-b-3 border-[#e0e0e0] pt-[3px] pr-[44px] pl-[44px]">
      <div className="h-[184px] w-[275px] shrink-0 border-3 border-[#e7e7e9] bg-white px-px">{children}</div>
      <p className={`ml-[44px] flex-1 pt-[5px] text-[44px] leading-[52px] whitespace-pre ${tracking}`}>{title}</p>
      <svg viewBox="0 0 24 24" className="h-[66px] w-[66px] shrink-0 fill-[#757575]">
        <circle cx="12" cy="6" r="2" />
        <circle cx="12" cy="12" r="2" />
        <circle cx="12" cy="18" r="2" />
      </svg>
    </div>
  );
}

export default function App() {
  return (
    <div className="relative flex h-[2155px] w-[1080px] flex-col overflow-hidden bg-[#fefefe] font-[Roboto,sans-serif] text-[#212121]">
      <header className="h-[318px] shrink-0 border-b-3 border-[#e0e0e0]">
        <div className="flex h-[177px] items-start px-[44px] pt-[45px]">
          <svg viewBox="0 0 24 24" className="h-[66px] w-[66px] fill-[#212121]">
            <path d="M20 11H7.83l5.59-5.59L12 4l-8 8 8 8 1.41-1.41L7.83 13H20v-2z" />
          </svg>
          <h1 className="ml-[88px] flex-1 pt-[4px] text-[49.5px] leading-[60px] tracking-[0.5px]">General</h1>
          <svg viewBox="0 0 24 24" className="-mt-[1.5px] h-[66px] w-[66px] fill-[#212121]">
            <path d="M19 6.41L17.59 5 12 10.59 6.41 5 5 6.41 10.59 12 5 17.59 6.41 19 12 13.41 17.59 19 19 17.59 13.41 12z" />
          </svg>
        </div>
        <div className="flex gap-[22px] px-[44px]">
          <Chip width="w-[239px]">Read-only</Chip>
          <Chip width="w-[186px]">Editing</Chip>
        </div>
      </header>

      <main className="flex min-h-0 flex-1 flex-col overflow-hidden">
        <SectionTitle>My maps</SectionTitle>
        <MapRow title="LMCR General Fieldwork" tracking="tracking-[0.44px]">
          <HarborMap />
        </MapRow>
        <MapRow title={"Structure_Investigations_Ge\nneral"} tracking="tracking-[0.35px]">
          <TopoMap />
        </MapRow>
        <SectionTitle>Results from ArcGIS Online</SectionTitle>
        <MapRow
          title={
            <>
              <span className="tracking-[-0.9px]">{"\u00a0\u00a0"}</span>
              {"Opening Salvos in\nPresident Trump’s Trade\nWar"}
            </>
          }
        >
          <SatelliteWorldMap />
        </MapRow>
        <MapRow title={"\u00a04. U.S. 50/Silva Valley\nParkway Interchange -\nPhase 1 Landscape"}>
          <StreetMap id="a" />
        </MapRow>
        <MapRow title={"\u00a05. U.S. 50/Bass Lake Road\nEast Bound Off Ramp\nSignalization"}>
          <PhysicalWorldMap />
        </MapRow>
        <MapRow title={"\u00a07. U.S. 50/Silva Valley\nParkway Interchange -\nPhase 2"}>
          <StreetMap id="b" />
        </MapRow>
      </main>

      <nav className="flex h-[132px] shrink-0 items-center bg-black pl-[230px]">
        <svg viewBox="0 0 18 30" className="h-[30px] w-[18px] fill-none stroke-[#999999] stroke-[3]">
          <path d="M16 2 3 15 16 28" />
        </svg>
        <span className="ml-[254px] h-[28px] w-[77px] rounded-full bg-[#999999]" />
      </nav>

      {/* annotations drawn over the screen */}
      <svg viewBox="26 66 386 220" className="absolute top-[82px] left-[429px] h-[73px] w-[129px] fill-[#ff1122]">
        <path d="M26 66 248 95 233 128 412 217 378 285 199 197 182 228Z" />
      </svg>
      <p className="absolute top-[154px] left-[538px] w-[500px] text-center font-[Carlito,Calibri,Lato,sans-serif] text-[48px] leading-[59px] text-[#ff3e22]">
        Type in search Terms
        <br />
        to find your map
      </p>
      <div className="absolute top-[728px] left-[10px] h-[282px] w-[1050px] border-9 border-[#78ff4d]" />
    </div>
  );
}
